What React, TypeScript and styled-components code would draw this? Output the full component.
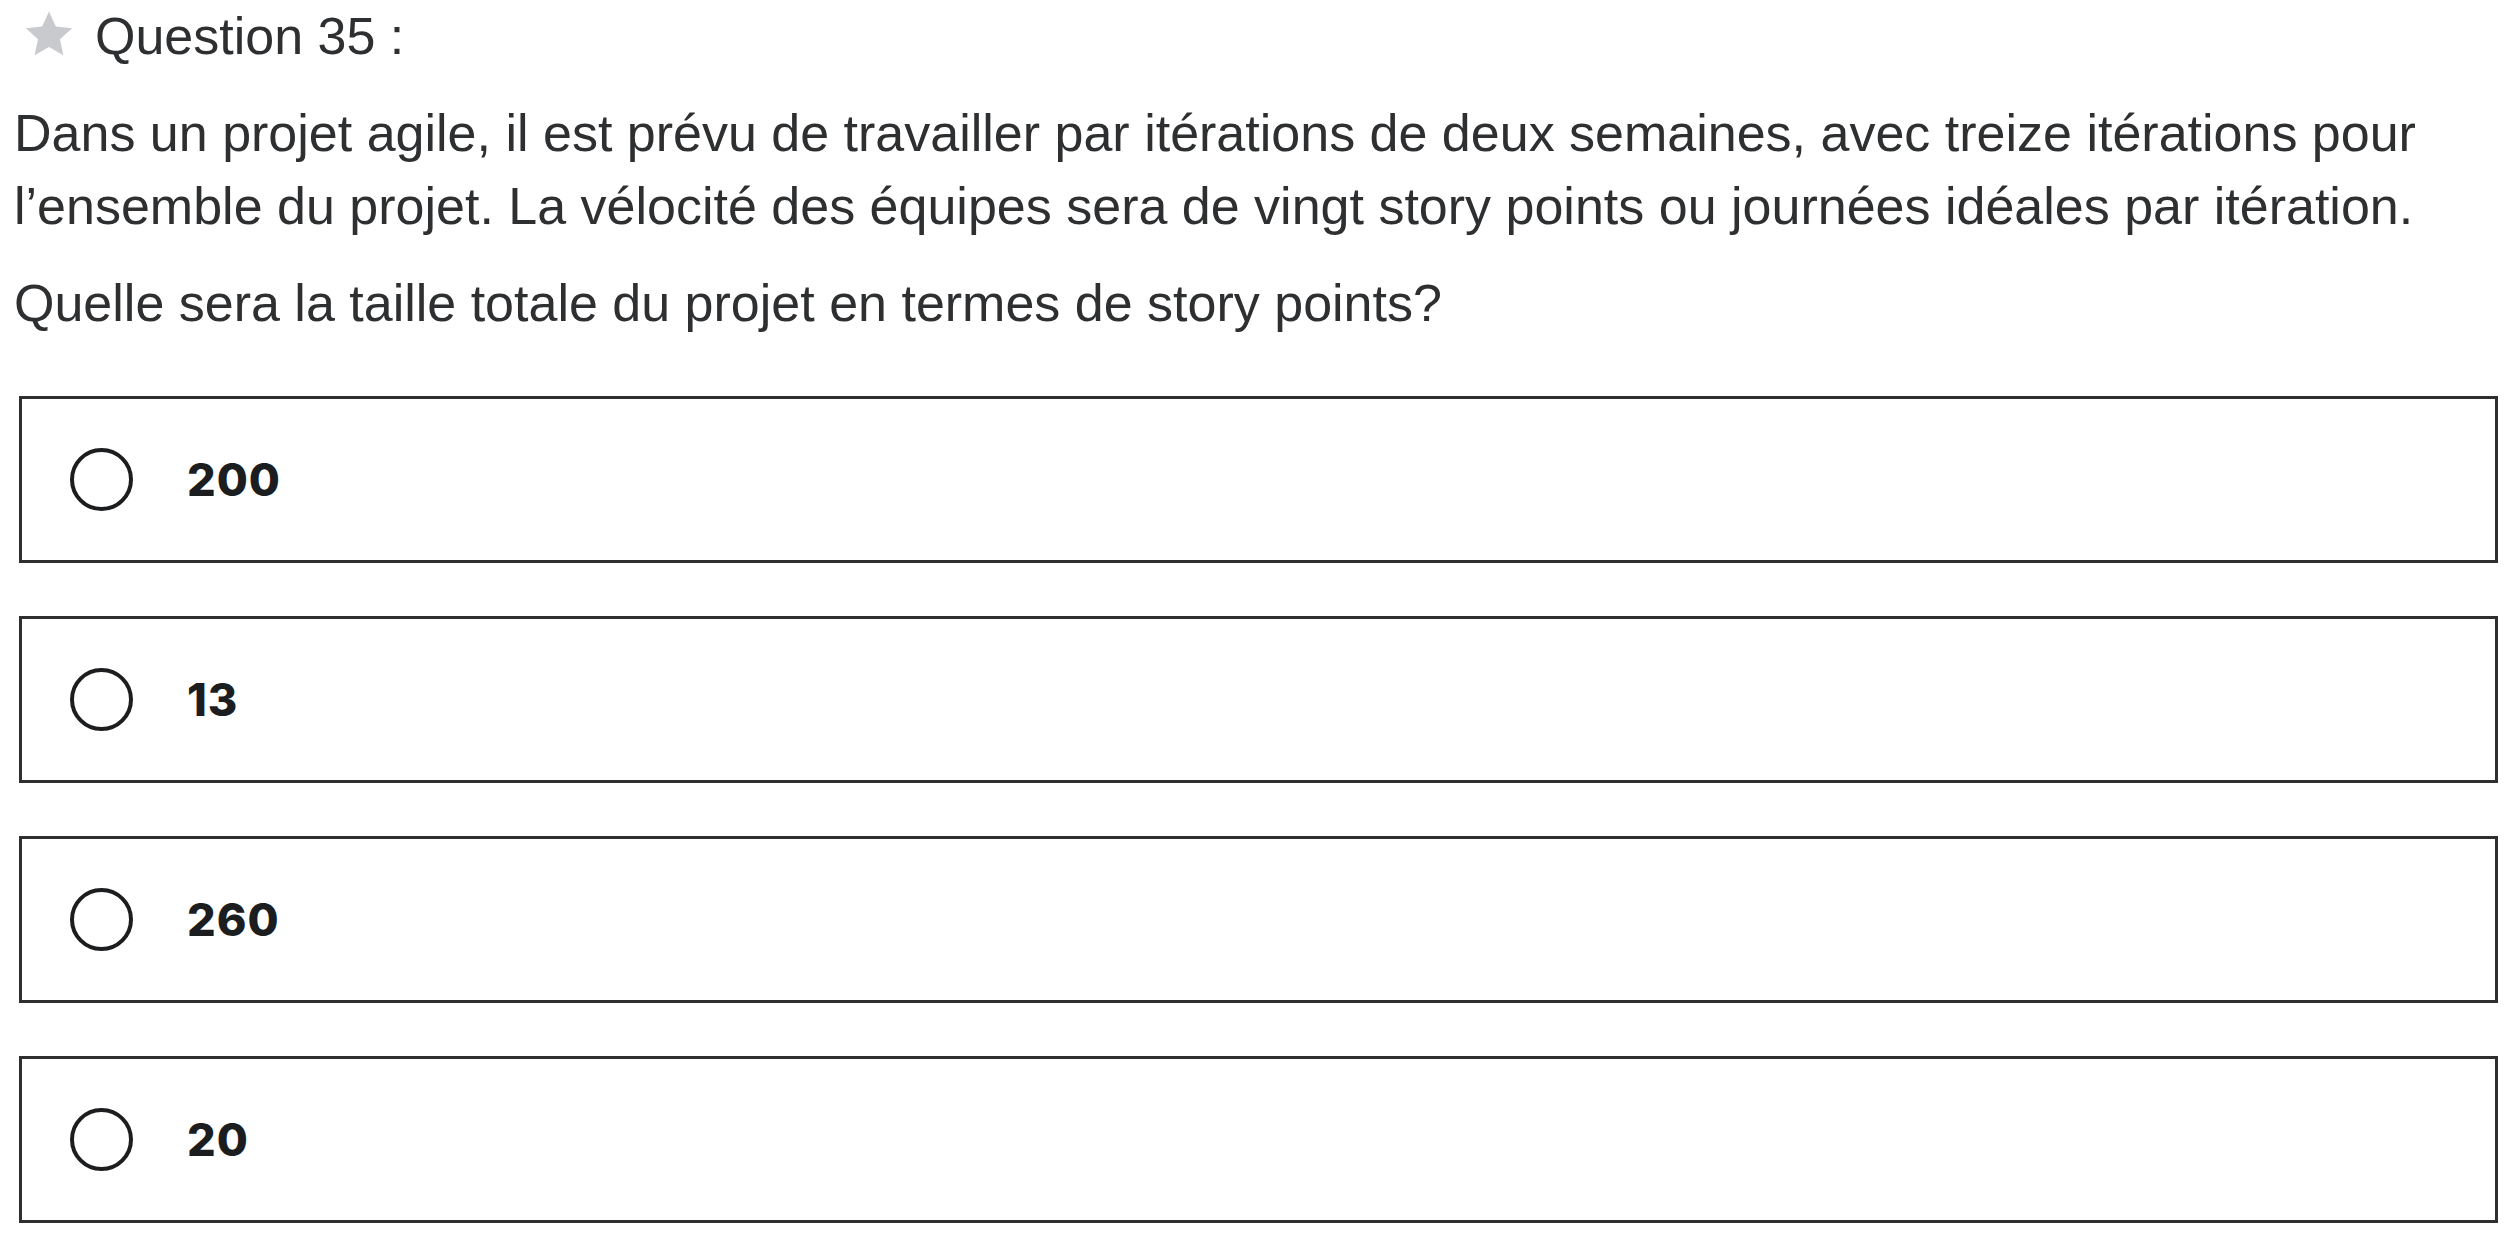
import React from "react";
import styled, { createGlobalStyle } from "styled-components";

const GlobalStyle = createGlobalStyle`
  html, body {
    margin: 0;
    padding: 0;
    background: #ffffff;
  }
  body {
    font-family: "Liberation Sans", Arial, sans-serif;
    color: #2d2f31;
  }
`;

const Page = styled.div`
  box-sizing: border-box;
  width: 2517px;
  padding: 6px 19px 0 14px;
  display: flex;
  flex-direction: column;
`;

const Header = styled.div`
  display: flex;
  align-items: center;
  gap: 20px;
  height: 60px;
  padding-left: 9px;
`;

const StarIcon = styled.svg`
  width: 52px;
  height: 52px;
  flex: none;
  margin-top: -4px;
`;

const Title = styled.span`
  font-size: 52px;
  line-height: 60px;
  color: #2d2f31;
`;

const Prompt = styled.div`
  margin-top: 31px;
  display: flex;
  flex-direction: column;
  gap: 24px;
`;

const Paragraph = styled.p`
  margin: 0;
  font-size: 52px;
  line-height: 73px;
  color: #2d2f31;
`;

const Options = styled.div`
  margin-top: 56px;
  margin-left: 5px;
  display: flex;
  flex-direction: column;
  gap: 53px;
`;

const OptionBox = styled.label`
  box-sizing: border-box;
  height: 167px;
  border: 3px solid #2d2f31;
  display: flex;
  align-items: center;
  padding-left: 48px;
  gap: 54px;
  background: #ffffff;
`;

const Radio = styled.span`
  box-sizing: border-box;
  width: 63px;
  height: 63px;
  border-radius: 50%;
  border: 4.5px solid #1c1d1f;
  flex: none;
`;

const OptionText = styled.span`
  font-family: Inter, "Liberation Sans", sans-serif;
  font-weight: 800;
  font-size: 45px;
  letter-spacing: 1px;
  line-height: 1;
  color: #1c1d1f;
`;

const answers = ["200", "13", "260", "20"];

export default function App() {
  return (
    <>
      <GlobalStyle />
      <Page>
        <Header>
          <StarIcon viewBox="0 0 24 24" aria-hidden="true">
            <path
              d="M12 1.6l3.15 6.93 7.55.8-5.65 5.08 1.6 7.44L12 18.05l-6.65 3.8 1.6-7.44L1.3 9.33l7.55-.8z"
              fill="#c8cace"
            />
          </StarIcon>
          <Title>Question 35 :</Title>
        </Header>
        <Prompt>
          <Paragraph>
            Dans un projet agile, il est prévu de travailler par itérations de deux semaines, avec treize itérations pour
            l’ensemble du projet. La vélocité des équipes sera de vingt story points ou journées idéales par itération.
          </Paragraph>
          <Paragraph>Quelle sera la taille totale du projet en termes de story points?</Paragraph>
        </Prompt>
        <Options>
          {answers.map((a) => (
            <OptionBox key={a}>
              <Radio />
              <OptionText>{a}</OptionText>
            </OptionBox>
          ))}
        </Options>
      </Page>
    </>
  );
}
